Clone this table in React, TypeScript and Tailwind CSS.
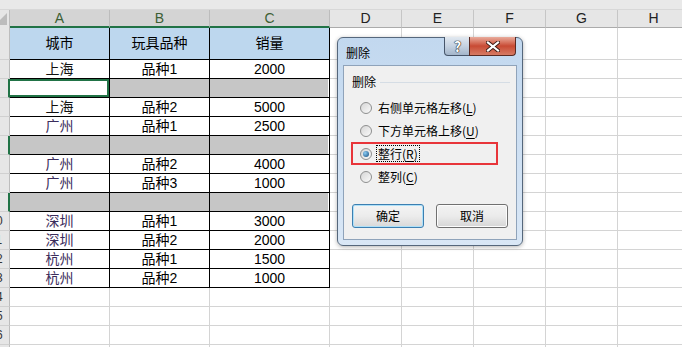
import React from "react";

type Row = { city?: string; kind?: string; qty?: string; blank?: boolean; active?: boolean };

const rows: Row[] = [
  { city: "上海", kind: "品种1", qty: "2000" },
  { blank: true, active: true },
  { city: "上海", kind: "品种2", qty: "5000" },
  { city: "广州", kind: "品种1", qty: "2500" },
  { blank: true },
  { city: "广州", kind: "品种2", qty: "4000" },
  { city: "广州", kind: "品种3", qty: "1000" },
  { blank: true },
  { city: "深圳", kind: "品种1", qty: "3000" },
  { city: "深圳", kind: "品种2", qty: "2000" },
  { city: "杭州", kind: "品种1", qty: "1500" },
  { city: "杭州", kind: "品种2", qty: "1000" },
];

const font = "font-['Liberation_Sans','Noto_Sans_CJK_SC',sans-serif]";
const uiFont = "font-['Noto_Sans_CJK_SC','Liberation_Sans',sans-serif]";

// row number cell, only the tail of two-digit numbers shows in the narrow strip
function RowHead({ n, h, picked }: { n: number; h: string; picked?: boolean }) {
  return (
    <div
      className={`${h} w-[10px] shrink-0 overflow-hidden border-b border-[#d0d0d0] bg-[#e6e6e6] ${
        picked ? "border-r-2 border-r-[#217346]" : "border-r border-r-[#bdbdbd]"
      }`}
    >
      <div className="-ml-[19px] flex h-full w-[30px] items-center justify-center text-[12px] text-[#333]">{n}</div>
    </div>
  );
}

function FillCols({ h }: { h: string }) {
  return (
    <>
      {[0, 1, 2, 3, 4].map((i) => (
        <div key={i} className={`${h} w-[72px] shrink-0 border-r border-b border-[#d4d4d4] bg-white`} />
      ))}
    </>
  );
}

function Radio({ on }: { on?: boolean }) {
  return (
    <span className="flex h-[12px] w-[12px] shrink-0 items-center justify-center rounded-full border border-[#8e8f8f] bg-linear-to-br from-[#d6d6d6] to-[#fafafa]">
      {on && <span className="h-[6px] w-[6px] rounded-full bg-radial-[at_35%_35%] from-[#8ccdf5] to-[#134a7c]" />}
    </span>
  );
}

function DeleteDialog() {
  return (
    <div className={`absolute top-[37px] left-[337px] flex h-[209px] w-[186px] flex-col rounded-[6px] border border-[#55677c] bg-linear-to-b from-[#c2d8ef] to-[#d9e7f6] px-[5px] pb-[5px] shadow-[0_1px_4px_rgba(0,0,0,0.3)] ${uiFont}`}>
      {/* caption */}
      <div className="relative h-[27px] shrink-0">
        <span className="absolute top-[8px] left-[3px] text-[12px] leading-[14px] text-black">删除</span>
        <div className="absolute -top-px right-[46px] flex h-[19px] w-[27px] items-center justify-center rounded-bl-[4px] border border-t-0 border-[#46556a] bg-linear-to-b from-[#e1e8f0] via-[#c5d2e1] to-[#a3b5ca]">
          <span className="text-[14px] leading-none font-bold text-white [text-shadow:0_0_1px_#222,0_0_1px_#222,0_0_1px_#222]">?</span>
        </div>
        <div className="absolute -top-px right-[1px] flex h-[19px] w-[47px] items-center justify-center rounded-br-[4px] border border-t-0 border-[#5a2a22] bg-linear-to-b from-[#e8ab9c] via-[#c84a34] to-[#d67a63]">
          <svg width="14" height="11" viewBox="0 0 14 11">
            <path d="M2 1.5 L12 9.5 M12 1.5 L2 9.5" stroke="#3a1a14" strokeWidth="4" strokeLinecap="square" />
            <path d="M2 1.5 L12 9.5 M12 1.5 L2 9.5" stroke="#fff" strokeWidth="2.2" strokeLinecap="square" />
          </svg>
        </div>
      </div>

      {/* client area */}
      <div className="relative flex-1 border border-[#8fa3ba] bg-[#f0f0f0] pt-[8px] text-[12px] text-black">
        <div className="flex h-[16px] items-center gap-[4px] pr-[6px] pl-[8px]">
          <span>删除</span>
          <span className="h-px flex-1 bg-[#d5dde5]" />
        </div>
        <div className="mt-[6px] flex flex-col pl-[16px]">
          {[
            { t: "右侧单元格左移", k: "L" },
            { t: "下方单元格上移", k: "U" },
            { t: "整行", k: "R", on: true },
            { t: "整列", k: "C" },
          ].map((o) => (
            <div key={o.k} className="flex h-[23px] items-center gap-[5px]">
              <Radio on={o.on} />
              <span className={`px-[1px] leading-[15px] ${o.on ? "outline-1 outline-black outline-dotted" : ""}`}>
                {o.t}(<span className="underline underline-offset-2">{o.k}</span>)
              </span>
            </div>
          ))}
        </div>
        <div className="mt-[16px] flex gap-[12px] pl-[8px]">
          <div className="flex h-[24px] w-[72px] items-center justify-center rounded-[3px] border border-[#3c7fb1] bg-linear-to-b from-[#f4f4f4] via-[#ececec] to-[#d8d8d8] shadow-[inset_0_0_0_1px_#aee0f8]">
            确定
          </div>
          <div className="flex h-[24px] w-[72px] items-center justify-center rounded-[3px] border border-[#707070] bg-linear-to-b from-[#f2f2f2] via-[#ebebeb] to-[#d6d6d6] shadow-[inset_0_0_0_1px_#fcfcfc]">
            取消
          </div>
        </div>
        {/* red annotation box */}
        <div className="absolute top-[76px] left-[7px] h-[23px] w-[147px] border-2 border-[#e8353a]" />
      </div>
    </div>
  );
}

export default function App() {
  return (
    <div className={`relative h-[347px] w-[682px] overflow-hidden bg-white ${font}`}>
      <div className="h-[10px] border-b border-[#d8d8d8] bg-[#e9e9e9]" />

      {/* column letters */}
      <div className="flex h-[18px] text-[14px]">
        <div className="h-full w-[10px] shrink-0 overflow-hidden border-r border-[#bdbdbd] bg-[#e6e6e6]">
          <svg width="10" height="18" viewBox="0 0 10 18">
            <polygon points="7,3 7,15 -5,15" fill="#bcbcbc" />
          </svg>
        </div>
        {[
          { l: "A", w: "w-[100px]" },
          { l: "B", w: "w-[100px]" },
          { l: "C", w: "w-[120px]" },
        ].map((c) => (
          <div key={c.l} className={`${c.w} flex h-full shrink-0 items-center justify-center border-r border-b-2 border-r-[#bcbcbc] border-b-[#217346] bg-[#d4d4d4] text-[#3d5f34]`}>
            {c.l}
          </div>
        ))}
        {["D", "E", "F", "G", "H"].map((l) => (
          <div key={l} className="flex h-full w-[72px] shrink-0 items-center justify-center border-r border-b border-r-[#c6c6c6] border-b-[#ababab] bg-[#e6e6e6] text-[#222]">
            {l}
          </div>
        ))}
      </div>

      {/* title row */}
      <div className="flex text-[14px] text-black">
        <RowHead n={1} h="h-[32px]" />
        <div className="flex h-[32px] w-[100px] shrink-0 items-center justify-center border-r border-b border-black bg-[#bdd7ee]">城市</div>
        <div className="flex h-[32px] w-[100px] shrink-0 items-center justify-center border-r border-b border-black bg-[#bdd7ee]">玩具品种</div>
        <div className="flex h-[32px] w-[120px] shrink-0 items-center justify-center border-r border-b border-black bg-[#bdd7ee]">销量</div>
        <FillCols h="h-[32px]" />
      </div>

      {rows.map((r, i) => (
        <div key={i} className="flex text-[14px] leading-none">
          <RowHead n={i + 2} h="h-[19px]" picked={r.blank} />
          {r.blank ? (
            <>
              <div className={`h-[19px] w-[100px] shrink-0 border-r border-b border-black ${r.active ? "bg-white" : "bg-[#c6c6c6]"}`}>
                {r.active && <div className="-ml-[2px] h-full border-2 border-[#217346]" />}
              </div>
              <div className="h-[19px] w-[100px] shrink-0 border-r border-b border-black bg-[#c6c6c6]" />
              <div className="h-[19px] w-[120px] shrink-0 border-r border-b border-black bg-[#c6c6c6] shadow-[inset_-1px_0_0_#ffffff]" />
            </>
          ) : (
            <>
              <div className={`flex h-[19px] w-[100px] shrink-0 items-center justify-center border-r border-b border-black ${r.city === "上海" ? "text-[#111]" : "text-[#3b2d5c]"}`}>
                {r.city}
              </div>
              <div className="flex h-[19px] w-[100px] shrink-0 items-center justify-center border-r border-b border-black">{r.kind}</div>
              <div className="flex h-[19px] w-[120px] shrink-0 items-center justify-center border-r border-b border-black">{r.qty}</div>
            </>
          )}
          <FillCols h="h-[19px]" />
        </div>
      ))}

      {[14, 15, 16, 17].map((n) => (
        <div key={n} className="flex">
          <RowHead n={n} h="h-[19px]" />
          <div className="h-[19px] w-[100px] shrink-0 border-r border-b border-[#d4d4d4]" />
          <div className="h-[19px] w-[100px] shrink-0 border-r border-b border-[#d4d4d4]" />
          <div className="h-[19px] w-[120px] shrink-0 border-r border-b border-[#d4d4d4]" />
          <FillCols h="h-[19px]" />
        </div>
      ))}

      <DeleteDialog />
    </div>
  );
}
